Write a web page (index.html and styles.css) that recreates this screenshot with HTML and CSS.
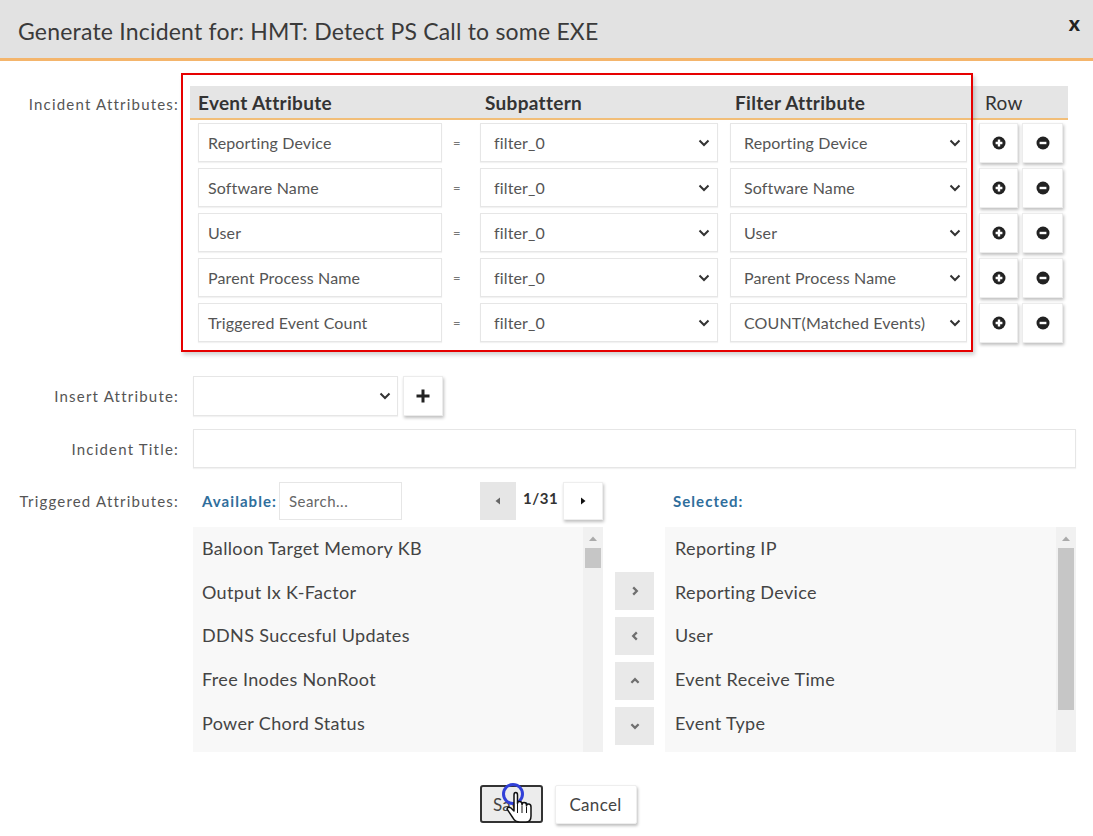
FILE: index.html
```html
<!DOCTYPE html>
<html lang="en">
<head>
<meta charset="utf-8">
<title>Generate Incident</title>
<link rel="stylesheet" href="styles.css">
</head>
<body>
<div class="dialog">
  <header class="dlg-head">
    <h1 class="dlg-title">Generate Incident for: HMT: Detect PS Call to some EXE</h1>
    <span class="close">x</span>
  </header>

  <main class="dlg-body">
    <div class="frow frow-top">
      <div class="flabel flabel-top">Incident Attributes:</div>
      <div class="attr-table">
        <div class="thead">
          <div class="th th-event">Event Attribute</div>
          <div class="th th-sub">Subpattern</div>
          <div class="th th-filter">Filter Attribute</div>
          <div class="th th-row">Row</div>
        </div>

        <div class="trow">
          <div class="inp inp-event">Reporting Device</div>
          <div class="eq">=</div>
          <div class="sel sel-sub"><span>filter_0</span><svg class="chev" viewBox="0 0 12 8"><path d="M1.5 1.5 L6 6 L10.5 1.5"/></svg></div>
          <div class="sel sel-filter"><span>Reporting Device</span><svg class="chev" viewBox="0 0 12 8"><path d="M1.5 1.5 L6 6 L10.5 1.5"/></svg></div>
          <div class="rbtn rbtn-add"><svg viewBox="0 0 14 14"><circle cx="7" cy="7" r="6.5"/><path class="w" d="M7 3.6 V10.4 M3.6 7 H10.4"/></svg></div>
          <div class="rbtn rbtn-del"><svg viewBox="0 0 14 14"><circle cx="7" cy="7" r="6.5"/><path class="w" d="M3.6 7 H10.4"/></svg></div>
        </div>

        <div class="trow">
          <div class="inp inp-event">Software Name</div>
          <div class="eq">=</div>
          <div class="sel sel-sub"><span>filter_0</span><svg class="chev" viewBox="0 0 12 8"><path d="M1.5 1.5 L6 6 L10.5 1.5"/></svg></div>
          <div class="sel sel-filter"><span>Software Name</span><svg class="chev" viewBox="0 0 12 8"><path d="M1.5 1.5 L6 6 L10.5 1.5"/></svg></div>
          <div class="rbtn rbtn-add"><svg viewBox="0 0 14 14"><circle cx="7" cy="7" r="6.5"/><path class="w" d="M7 3.6 V10.4 M3.6 7 H10.4"/></svg></div>
          <div class="rbtn rbtn-del"><svg viewBox="0 0 14 14"><circle cx="7" cy="7" r="6.5"/><path class="w" d="M3.6 7 H10.4"/></svg></div>
        </div>

        <div class="trow">
          <div class="inp inp-event">User</div>
          <div class="eq">=</div>
          <div class="sel sel-sub"><span>filter_0</span><svg class="chev" viewBox="0 0 12 8"><path d="M1.5 1.5 L6 6 L10.5 1.5"/></svg></div>
          <div class="sel sel-filter"><span>User</span><svg class="chev" viewBox="0 0 12 8"><path d="M1.5 1.5 L6 6 L10.5 1.5"/></svg></div>
          <div class="rbtn rbtn-add"><svg viewBox="0 0 14 14"><circle cx="7" cy="7" r="6.5"/><path class="w" d="M7 3.6 V10.4 M3.6 7 H10.4"/></svg></div>
          <div class="rbtn rbtn-del"><svg viewBox="0 0 14 14"><circle cx="7" cy="7" r="6.5"/><path class="w" d="M3.6 7 H10.4"/></svg></div>
        </div>

        <div class="trow">
          <div class="inp inp-event">Parent Process Name</div>
          <div class="eq">=</div>
          <div class="sel sel-sub"><span>filter_0</span><svg class="chev" viewBox="0 0 12 8"><path d="M1.5 1.5 L6 6 L10.5 1.5"/></svg></div>
          <div class="sel sel-filter"><span>Parent Process Name</span><svg class="chev" viewBox="0 0 12 8"><path d="M1.5 1.5 L6 6 L10.5 1.5"/></svg></div>
          <div class="rbtn rbtn-add"><svg viewBox="0 0 14 14"><circle cx="7" cy="7" r="6.5"/><path class="w" d="M7 3.6 V10.4 M3.6 7 H10.4"/></svg></div>
          <div class="rbtn rbtn-del"><svg viewBox="0 0 14 14"><circle cx="7" cy="7" r="6.5"/><path class="w" d="M3.6 7 H10.4"/></svg></div>
        </div>

        <div class="trow">
          <div class="inp inp-event">Triggered Event Count</div>
          <div class="eq">=</div>
          <div class="sel sel-sub"><span>filter_0</span><svg class="chev" viewBox="0 0 12 8"><path d="M1.5 1.5 L6 6 L10.5 1.5"/></svg></div>
          <div class="sel sel-filter"><span>COUNT(Matched Events)</span><svg class="chev" viewBox="0 0 12 8"><path d="M1.5 1.5 L6 6 L10.5 1.5"/></svg></div>
          <div class="rbtn rbtn-add"><svg viewBox="0 0 14 14"><circle cx="7" cy="7" r="6.5"/><path class="w" d="M7 3.6 V10.4 M3.6 7 H10.4"/></svg></div>
          <div class="rbtn rbtn-del"><svg viewBox="0 0 14 14"><circle cx="7" cy="7" r="6.5"/><path class="w" d="M3.6 7 H10.4"/></svg></div>
        </div>

        <div class="highlight"></div>
      </div>
    </div>

    <div class="frow frow-insert">
      <div class="flabel">Insert Attribute:</div>
      <div class="insert-ctrl">
        <div class="sel sel-insert"><span></span><svg class="chev" viewBox="0 0 12 8"><path d="M1.5 1.5 L6 6 L10.5 1.5"/></svg></div>
        <div class="plus-btn"><svg viewBox="0 0 16 16"><path d="M8 1.5 V14.5 M1.5 8 H14.5"/></svg></div>
      </div>
    </div>

    <div class="frow frow-title">
      <div class="flabel">Incident Title:</div>
      <div class="inp inp-title"></div>
    </div>

    <div class="frow frow-trig">
      <div class="flabel">Triggered Attributes:</div>
      <div class="picker">
        <div class="pick-bar pick-bar-left">
          <span class="pick-label">Available:</span>
          <div class="search">Search...</div>
          <div class="pager">
            <div class="pg pg-prev"><svg viewBox="0 0 6 8"><path d="M5 0.5 V7.5 L0.5 4 Z"/></svg></div>
            <span class="pg-num">1/31</span>
            <div class="pg pg-next"><svg viewBox="0 0 6 8"><path d="M1 0.5 V7.5 L5.5 4 Z"/></svg></div>
          </div>
        </div>
        <div class="pick-gap"></div>
        <div class="pick-bar pick-bar-right">
          <span class="pick-label">Selected:</span>
        </div>

        <div class="list list-avail">
          <ul class="items">
            <li>Balloon Target Memory KB</li>
            <li>Output Ix K-Factor</li>
            <li>DDNS Succesful Updates</li>
            <li>Free Inodes NonRoot</li>
            <li>Power Chord Status</li>
          </ul>
          <div class="sbar"><svg class="sb-up" viewBox="0 0 8 5"><path d="M0 5 L4 0.5 L8 5 Z"/></svg><div class="thumb thumb-short"></div></div>
        </div>

        <div class="movers">
          <div class="mv"><svg viewBox="0 0 10 10"><path d="M3.5 2 L6.5 5 L3.5 8"/></svg></div>
          <div class="mv"><svg viewBox="0 0 10 10"><path d="M6.5 2 L3.5 5 L6.5 8"/></svg></div>
          <div class="mv"><svg viewBox="0 0 10 10"><path d="M2 6.5 L5 3.5 L8 6.5"/></svg></div>
          <div class="mv"><svg viewBox="0 0 10 10"><path d="M2 3.5 L5 6.5 L8 3.5"/></svg></div>
        </div>

        <div class="list list-sel">
          <ul class="items">
            <li>Reporting IP</li>
            <li>Reporting Device</li>
            <li>User</li>
            <li>Event Receive Time</li>
            <li>Event Type</li>
          </ul>
          <div class="sbar"><svg class="sb-up" viewBox="0 0 8 5"><path d="M0 5 L4 0.5 L8 5 Z"/></svg><div class="thumb thumb-long"></div></div>
        </div>
      </div>
    </div>

    <div class="footer">
      <button class="btn btn-save">Save</button>
      <button class="btn btn-cancel">Cancel</button>
      <div class="cursor">
        <svg viewBox="0 0 40 44" class="cursor-svg">
          <circle class="ring" cx="13" cy="11" r="9.5"/>
          <path class="hand" d="M14 12 V28 L11 25 Q8 23 7 26 L13 35 Q15 39 20 39 H26 Q31 39 31 33 V24 Q31 21 28.5 21 Q26.5 21 26.5 23 V22 Q26.5 19.5 24 19.5 Q22 19.5 22 22 V21 Q22 18.5 19.5 18.5 Q17.5 18.5 17.5 20.5 V12 Q17.5 9.5 15.75 9.5 Q14 9.5 14 12 Z"/>
          <path class="hand-line" d="M22 23 V30 M26.5 24 V30 M17.5 21 V30"/>
        </svg>
      </div>
    </div>
  </main>
</div>
</body>
</html>
```

FILE: styles.css
```css
* { box-sizing: border-box; }

html, body {
  margin: 0;
  padding: 0;
  background: #ffffff;
}

body {
  font-family: Lato, "Open Sans", "Liberation Sans", sans-serif;
  color: #444;
  width: 1093px;
  height: 836px;
  overflow: hidden;
}

.dialog {
  width: 1093px;
  height: 836px;
  background: #fff;
}

/* ---------- header ---------- */
.dlg-head {
  height: 61px;
  background: #e2e2e2;
  border-bottom: 3px solid #f4b56c;
  display: flex;
  align-items: center;
  justify-content: space-between;
  padding: 4px 13px 0 18px;
}

.dlg-title {
  margin: 0;
  font-weight: 400;
  font-size: 23px;
  color: #3a3a3a;
  letter-spacing: 0.2px;
}

.close {
  font-size: 21px;
  font-weight: 900;
  color: #222;
  align-self: flex-start;
  margin-top: 8px;
  line-height: 1;
}

/* ---------- body ---------- */
.dlg-body {
  padding-top: 25px;
  position: relative;
}

.frow {
  display: grid;
  grid-template-columns: 180px 1fr;
  column-gap: 13px;
  align-items: center;
  padding-right: 17px;
}

.flabel {
  text-align: right;
  padding-right: 1px;
  font-size: 15px;
  letter-spacing: 1.2px;
  color: #555;
  white-space: nowrap;
}

.frow-top { align-items: start; }
.flabel-top { line-height: 37px; }

/* ---------- attribute table ---------- */
.attr-table {
  position: relative;
  margin-left: -3px;
  width: 878px;
}

.thead {
  display: flex;
  height: 34px;
  background: #e5e5e5;
  border-bottom: 2px solid #f2be78;
  align-items: center;
}

.th {
  font-size: 19px;
  font-weight: 700;
  color: #333;
  letter-spacing: 0.3px;
}
.th-event { width: 290px; padding-left: 8px; }
.th-sub { width: 250px; padding-left: 5px; }
.th-filter { width: 249px; padding-left: 5px; }
.th-row { padding-left: 6px; font-weight: 400; color: #333; }

.trow {
  display: flex;
  align-items: center;
  height: 45px;
  padding-left: 8px;
}

.inp {
  background: #fff;
  border: 1px solid #e6e6e6;
  box-shadow: 0 1px 1px rgba(0, 0, 0, 0.05);
  font-size: 16px;
  letter-spacing: 0.15px;
  color: #555;
  display: flex;
  align-items: center;
}

.inp-event {
  width: 244px;
  height: 39px;
  padding-left: 9px;
}

.eq {
  width: 38px;
  padding-left: 11px;
  font-size: 13px;
  color: #777;
}

.sel {
  height: 39px;
  background: #fff;
  border: 1px solid #e6e6e6;
  box-shadow: 0 1px 1px rgba(0, 0, 0, 0.05);
  display: flex;
  align-items: center;
  justify-content: space-between;
  padding: 0 7px 0 13px;
  font-size: 16px;
  letter-spacing: 0.15px;
  color: #555;
}

.sel-sub { width: 238px; }
.sel-filter { width: 237px; margin-left: 12px; padding-left: 13px; padding-right: 5px; }

.chev {
  width: 12px;
  height: 8px;
  flex: none;
  fill: none;
  stroke: #333;
  stroke-width: 2;
}

.rbtn {
  width: 40px;
  height: 40px;
  background: #fff;
  border: 1px solid #ececec;
  box-shadow: 1px 2px 3px rgba(0, 0, 0, 0.25);
  display: flex;
  align-items: center;
  justify-content: center;
}
.rbtn-add { margin-left: 12px; width: 39px; }
.rbtn-del { margin-left: 4px; width: 41px; }

.rbtn svg { width: 14px; height: 14px; }
.rbtn circle { fill: #222; }
.rbtn .w { stroke: #fff; stroke-width: 2.4; fill: none; }

.highlight {
  position: absolute;
  left: -9px;
  top: -13px;
  width: 792px;
  height: 279px;
  border: 2px solid #e60000;
  box-shadow: 2px 3px 4px rgba(0, 0, 0, 0.18);
  pointer-events: none;
}

/* ---------- insert attribute ---------- */
.frow-insert { margin-top: 31px; }

.insert-ctrl {
  display: flex;
  align-items: center;
  gap: 5px;
}

.sel-insert {
  width: 205px;
  height: 40px;
  padding-right: 6px;
}

.plus-btn {
  width: 40px;
  height: 40px;
  background: #fff;
  border: 1px solid #ececec;
  box-shadow: 1px 2px 3px rgba(0, 0, 0, 0.25);
  display: flex;
  align-items: center;
  justify-content: center;
}
.plus-btn svg {
  width: 16px;
  height: 16px;
  fill: none;
  stroke: #222;
  stroke-width: 3;
}

/* ---------- incident title ---------- */
.frow-title { margin-top: 13px; }
.inp-title { height: 39px; width: 883px; }

/* ---------- triggered attributes ---------- */
.frow-trig { margin-top: 14px; align-items: start; }
.frow-trig .flabel { line-height: 38px; }

.picker {
  display: grid;
  grid-template-columns: 410px 62px 411px;
  grid-template-rows: 38px 225px;
  row-gap: 7px;
}

.pick-bar {
  display: flex;
  align-items: center;
}
.pick-bar-left { padding-left: 9px; }
.pick-bar-right { padding-left: 8px; }

.pick-label {
  font-size: 15px;
  font-weight: 700;
  color: #2f6e9c;
  letter-spacing: 1.05px;
}

.search {
  margin-left: 2px;
  width: 123px;
  height: 38px;
  border: 1px solid #e6e6e6;
  background: #fff;
  font-size: 15px;
  letter-spacing: 0.5px;
  color: #666;
  display: flex;
  align-items: center;
  padding-left: 9px;
}

.pager {
  margin-left: auto;
  display: flex;
  align-items: center;
  height: 38px;
}

.pg {
  height: 38px;
  display: flex;
  align-items: center;
  justify-content: center;
}
.pg svg { width: 6px; height: 8px; }
.pg-prev { width: 36px; background: #e6e6e6; }
.pg-prev svg { fill: #666; }
.pg-next {
  width: 40px;
  background: #fff;
  border: 1px solid #eee;
  box-shadow: 1px 2px 3px rgba(0, 0, 0, 0.25);
}
.pg-next svg { fill: #111; }

.pg-num {
  width: 47px;
  padding-left: 7px;
  font-size: 15px;
  letter-spacing: 0.5px;
  font-weight: 700;
  color: #333;
  align-self: flex-start;
  padding-top: 7px;
}

.list {
  position: relative;
  background: #f8f8f8;
  display: flex;
}

.items {
  list-style: none;
  margin: 0;
  padding: 0 0 0 9px;
  flex: 1;
}
.items li {
  height: 43.7px;
  line-height: 42px;
  font-size: 18px;
  letter-spacing: 0.35px;
  color: #444;
}
.list-sel .items { padding-left: 10px; }

.sbar {
  width: 20px;
  background: #f1f1f1;
  position: relative;
}
.sb-up {
  position: absolute;
  left: 6px;
  top: 9px;
  width: 8px;
  height: 5px;
  fill: #aaa;
}
.thumb {
  position: absolute;
  left: 2px;
  width: 16px;
  top: 21px;
  background: #c6c6c6;
}
.thumb-short { height: 20px; }
.thumb-long { height: 162px; }

.movers {
  display: flex;
  flex-direction: column;
  gap: 7px;
  padding: 45px 0 0 12px;
}
.mv {
  width: 39px;
  height: 38px;
  background: #e9e9e9;
  display: flex;
  align-items: center;
  justify-content: center;
}
.mv svg {
  width: 12px;
  height: 12px;
  fill: none;
  stroke: #6f6f6f;
  stroke-width: 1.9;
}

/* ---------- footer ---------- */
.footer {
  margin-top: 33px;
  display: flex;
  justify-content: center;
  gap: 12px;
  padding-left: 23px;
  position: relative;
}

.btn {
  font-family: Lato, "Open Sans", "Liberation Sans", sans-serif;
  font-size: 17px;
  letter-spacing: 0.3px;
  color: #444;
  height: 38px;
  padding: 0;
  cursor: pointer;
}
.btn-save {
  width: 63px;
  background: #ececec;
  border: 2px solid #333;
  border-radius: 3px;
}
.btn-cancel {
  width: 82px;
  height: 39px;
  background: #fff;
  border: 1px solid #eee;
  border-radius: 2px;
  box-shadow: 1px 2px 3px rgba(0, 0, 0, 0.25);
}

.cursor {
  position: absolute;
  left: 500px;
  top: -2px;
  width: 40px;
  height: 44px;
  pointer-events: none;
}
.cursor-svg { width: 40px; height: 44px; }
.ring { fill: none; stroke: #3140d8; stroke-width: 3; }
.hand { fill: #fff; stroke: #111; stroke-width: 1.5; stroke-linejoin: round; }
.hand-line { fill: none; stroke: #111; stroke-width: 1; }
```
